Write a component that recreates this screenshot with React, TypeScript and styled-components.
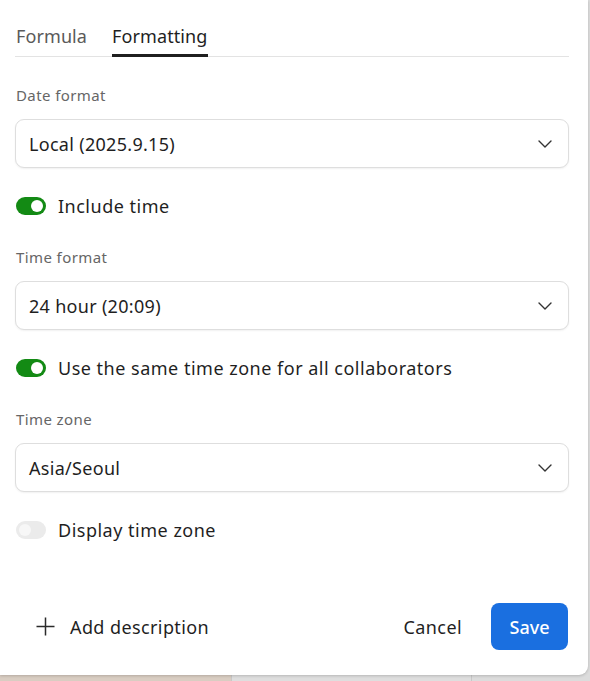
import React, { useState } from 'react';
import styled, { createGlobalStyle, css } from 'styled-components';
import { ChevronDown } from 'lucide-react';

const GlobalStyle = createGlobalStyle`
  html, body {
    margin: 0;
    padding: 0;
    background: #ffffff;
  }
  body {
    font-family: "Noto Sans", "Open Sans", sans-serif;
    color: #1f1f1f;
  }
  * {
    box-sizing: border-box;
  }
`;

interface ITab {
  active?: boolean;
};

interface ISwitch {
  on?: boolean;
};

const Page = styled.div`
  display: flex;
  flex-direction: column;
  width: 590px;
  height: 681px;
  overflow: hidden;
  background: #dcdcdc;
`;

const Card = styled.div`
  display: flex;
  flex-direction: column;
  height: 675px;
  margin-right: 2px;
  padding: 0 19px 0 15px;
  background: #ffffff;
  border-bottom-right-radius: 9px;
  box-shadow: 0 1px 3px rgba(0, 0, 0, 0.18);
  position: relative;
  z-index: 1;
`;

const Backdrop = styled.div`
  display: flex;
  flex: 1;
`;

const BackdropPane = styled.div<{ tone: string; w: string }>`
  width: ${(p) => p.w};
  flex-shrink: 0;
  background: ${(p) => p.tone};
  border-right: 1px solid #c8c8c8;
`;

const Tabs = styled.div`
  display: flex;
  gap: 25px;
  margin-top: 16px;
  padding-left: 1px;
  border-bottom: 1px solid #e3e3e3;
`;

const Tab = styled.button<ITab>`
  position: relative;
  height: 40px;
  padding: 0 0 1px;
  border: none;
  background: none;
  font-family: inherit;
  font-size: 18px;
  letter-spacing: 0.1px;
  cursor: pointer;
  color: ${(p) => (p.active ? '#1f1f1f' : '#5a5a5a')};

  ${(p) =>
    p.active &&
    css`
      &::after {
        content: '';
        position: absolute;
        left: 0;
        right: 0;
        bottom: -1px;
        height: 3px;
        background: #1f1f1f;
      }
    `}
`;

const Section = styled.div`
  display: flex;
  flex-direction: column;
  margin-top: 28px;
`;

const Label = styled.div`
  height: 20px;
  line-height: 20px;
  padding-left: 1px;
  font-size: 15px;
  letter-spacing: 0.4px;
  color: #666666;
  margin-bottom: 14px;
`;

const Select = styled.button`
  display: flex;
  align-items: center;
  justify-content: space-between;
  width: 100%;
  height: 49px;
  padding: 0 11px 0 13px;
  border: 1px solid #dedede;
  border-radius: 9px;
  background: #ffffff;
  box-shadow: 0 1px 2px rgba(0, 0, 0, 0.06);
  font-family: inherit;
  font-size: 18px;
  letter-spacing: 0.3px;
  color: #1f1f1f;
  cursor: pointer;
`;

const ToggleRow = styled.label`
  display: flex;
  align-items: center;
  gap: 12px;
  height: 24px;
  margin: 26px 0 29px;
  padding-left: 1px;
  font-size: 18px;
  letter-spacing: 0.5px;
  color: #1f1f1f;
  cursor: pointer;
`;

const Switch = styled.span<ISwitch>`
  position: relative;
  width: 30px;
  height: 18px;
  flex-shrink: 0;
  border-radius: 9px;
  background: ${(p) => (p.on ? '#138a14' : '#ebebeb')};

  &::after {
    content: '';
    position: absolute;
    top: 3px;
    left: ${(p) => (p.on ? '15px' : '3px')};
    width: 12px;
    height: 12px;
    border-radius: 50%;
    background: ${(p) => (p.on ? '#ffffff' : '#f7f7f7')};
  }
`;

const Footer = styled.div`
  display: flex;
  align-items: center;
  margin-top: auto;
  margin-bottom: 25px;
`;

const GhostButton = styled.button`
  display: flex;
  align-items: center;
  gap: 15px;
  height: 47px;
  padding: 0 14px;
  border: none;
  background: none;
  font-family: inherit;
  font-size: 18px;
  letter-spacing: 0.4px;
  color: #1f1f1f;
  cursor: pointer;
`;

const AddButton = styled(GhostButton)`
  margin-left: 7px;
  margin-right: auto;
`;

const SaveButton = styled.button`
  height: 47px;
  width: 77px;
  margin: 0 1px 0 15px;
  border: none;
  border-radius: 8px;
  background: #1a6fe0;
  color: #ffffff;
  font-family: inherit;
  font-size: 18px;
  font-weight: 500;
  cursor: pointer;
`;

const PlusIcon = () => (
  <svg width="19" height="19" viewBox="0 0 19 19" fill="none" stroke="#2a2a2a" strokeWidth="1.5">
    <path d="M9.5 0.5v18M0.5 9.5h18" />
  </svg>
);

const fields = [
  { label: 'Date format', value: 'Local (2025.9.15)', toggle: 'Include time', on: true },
  { label: 'Time format', value: '24 hour (20:09)', toggle: 'Use the same time zone for all collaborators', on: true },
  { label: 'Time zone', value: 'Asia/Seoul', toggle: 'Display time zone', on: false },
];

export default function App() {
  const [tab, setTab] = useState('Formatting');

  return (
    <>
      <GlobalStyle />
      <Page>
        <Card>
          <Tabs>
            {['Formula', 'Formatting'].map((t) => (
              <Tab key={t} active={tab === t} onClick={() => setTab(t)}>
                {t}
              </Tab>
            ))}
          </Tabs>

          <Section>
            {fields.map((f) => (
              <div key={f.label}>
                <Label>{f.label}</Label>
                <Select>
                  <span>{f.value}</span>
                  <ChevronDown size={24} strokeWidth={1.4} color="#333" />
                </Select>
                <ToggleRow>
                  <Switch on={f.on} />
                  {f.toggle}
                </ToggleRow>
              </div>
            ))}
          </Section>

          <Footer>
            <AddButton>
              <PlusIcon />
              Add description
            </AddButton>
            <GhostButton>Cancel</GhostButton>
            <SaveButton>Save</SaveButton>
          </Footer>
        </Card>
        <Backdrop>
          <BackdropPane tone="#d9cdc2" w="232px" />
          <BackdropPane tone="#dedede" w="240px" />
        </Backdrop>
      </Page>
    </>
  );
}
